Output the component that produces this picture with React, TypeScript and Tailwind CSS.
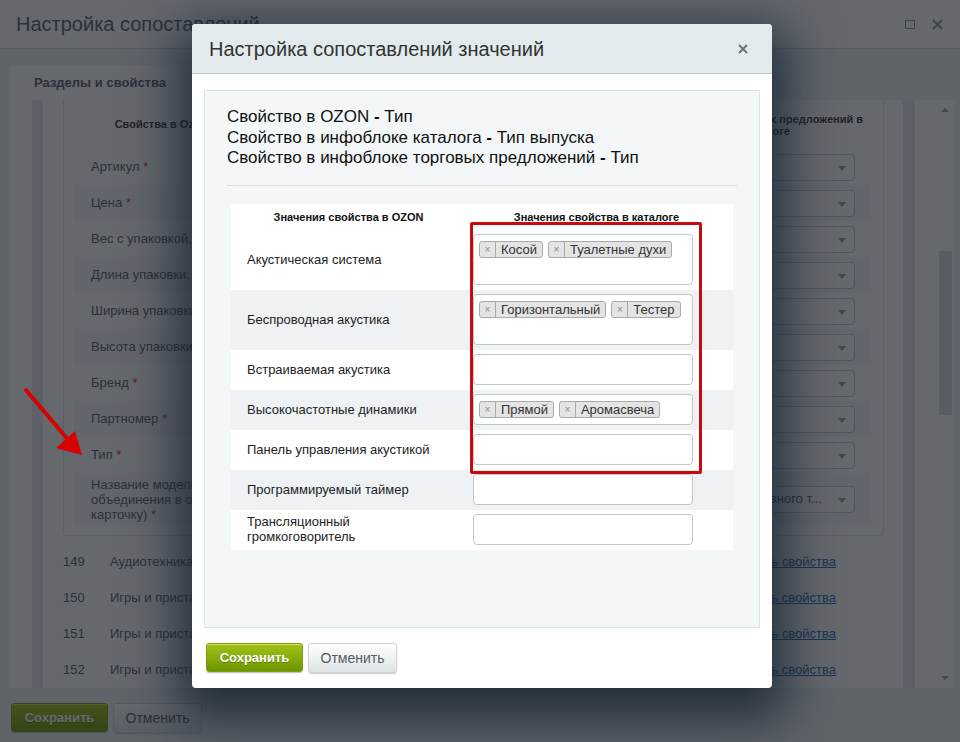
import React from "react";

const propRows = [
  "Артикул",
  "Цена",
  "Вес с упаковкой, г",
  "Длина упаковки, мм",
  "Ширина упаковки, мм",
  "Высота упаковки, мм",
  "Бренд",
  "Партномер",
  "Тип",
];

const sections = [
  { id: 149, name: "Аудиотехника" },
  { id: 150, name: "Игры и приставки" },
  { id: 151, name: "Игры и приставки" },
  { id: 152, name: "Игры и приставки" },
];

const valueRows = [
  { label: "Акустическая система", chips: ["Косой", "Туалетные духи"], tall: true },
  { label: "Беспроводная акустика", chips: ["Горизонтальный", "Тестер"], tall: true },
  { label: "Встраиваемая акустика", chips: [] as string[] },
  { label: "Высокочастотные динамики", chips: ["Прямой", "Аромасвеча"] },
  { label: "Панель управления акустикой", chips: [] as string[] },
  { label: "Программируемый таймер", chips: [] as string[] },
  { label: "Трансляционный громкоговоритель", chips: [] as string[] },
];

function Select({ text }: { text?: string }) {
  return (
    <div className="relative mr-[16px] ml-auto flex h-[27px] w-[184px] items-center overflow-hidden rounded-[4px] border border-[#c5cdd2] bg-white pr-[22px] pl-[8px]">
      <span className="whitespace-nowrap text-[13px] text-[#535c69]">{text}</span>
      <span className="absolute top-[11px] right-[8px] h-0 w-0 border-x-[4px] border-t-[5px] border-x-transparent border-t-[#9aa2a8]" />
    </div>
  );
}

function Chip({ label }: { label: string }) {
  return (
    <span className="inline-flex h-[17px] items-stretch rounded-[3px] border border-[#aaa] bg-[#e4e4e4] text-[13px] leading-[15px] text-[#333]">
      <span className="flex w-[16px] items-center justify-center border-r border-[#aaa] text-[10px] text-[#888]">×</span>
      <span className="pr-[5px] pl-[5px]">{label}</span>
    </span>
  );
}

function GreenButton({ children }: { children: React.ReactNode }) {
  return (
    <button className="h-[29px] w-[97px] rounded-[3px] border border-[#7c9d0e] bg-linear-to-b from-[#a3c317] to-[#6c9600] text-[13px] font-bold text-white shadow-[inset_0_1px_0_#d3e46b,0_1px_1px_rgba(0,0,0,0.25)] [text-shadow:0_1px_0_rgba(60,80,0,0.5)]">
      {children}
    </button>
  );
}

function GrayButton({ children }: { children: React.ReactNode }) {
  return (
    <button className="h-[30px] w-[89px] rounded-[3px] border border-[#cdd5d9] bg-linear-to-b from-white to-[#dde4e7] text-[14px] text-[#535c69] shadow-[0_1px_1px_rgba(0,0,0,0.2)]">
      {children}
    </button>
  );
}

function Page() {
  return (
    <div className="flex h-full flex-col">
      <header className="flex h-[49px] shrink-0 items-center justify-between border-b border-[#d5dadd] bg-white pr-[16px] pl-[16px]">
        <h1 className="text-[20px] text-[#535c69]">Настройка сопоставлений</h1>
        <div className="flex items-center gap-[17px] pr-[1px]">
          <span className="h-[9px] w-[10px] border-[1.5px] border-[#8f969c]" />
          <svg width="11" height="11" viewBox="0 0 11 11">
            <path d="M1 1L10 10M10 1L1 10" stroke="#8f969c" strokeWidth="2" />
          </svg>
        </div>
      </header>

      <div className="flex min-h-0 flex-1 flex-col pt-[16px] pr-[5px] pl-[10px]">
        <div className="flex h-[35px] w-[300px] items-center rounded-t-[4px] bg-white pl-[24px] text-[13px] font-bold text-[#535c69]">
          Разделы и свойства
        </div>
        <div className="flex min-h-0 flex-1 overflow-hidden bg-white">
          <div className="w-[22px]" />
          <div className="w-[11px] bg-[#e6ebee]" />
          <div className="w-[20px]" />
          <div className="flex w-[821px] flex-col">
            <div className="rounded-b-[4px] border-x border-b border-[#dfe5e8] pr-[12px] pb-[10px] pl-[10px]">
              <div className="flex h-[49px] items-center text-[11px] font-bold text-[#333]">
                <div className="w-[174px] text-center">Свойства в Ozon</div>
                <div className="ml-auto flex flex-col items-end pr-[8px] leading-[12px]">
                  <span>Свойства в инфоблоке торговых предложений в</span>
                  <span className="mr-[73px]">каталоге</span>
                </div>
              </div>
              {propRows.map((name, i) => (
                <div key={name} className={"flex h-[36px] items-center " + (i % 2 === 1 ? "bg-[#f5f7f8]" : "")}>
                  <span className="pl-[17px] text-[13px] text-[#535c69]">
                    {name} <span className="text-[#d2322d]">*</span>
                  </span>
                  <Select />
                </div>
              ))}
              <div className="flex h-[52px] items-center bg-[#f5f7f8]">
                <span className="pl-[17px] text-[13px] leading-[15px] text-[#535c69]">
                  Название модели (для
                  <br />
                  объединения в одну
                  <br />
                  карточку) <span className="text-[#d2322d]">*</span>
                </span>
                <Select text="Название основного т..." />
              </div>
            </div>
            <div className="pt-[8px]">
              {sections.map((s) => (
                <div key={s.id} className="flex h-[36px] items-center text-[13px] text-[#535c69]">
                  <span className="w-[47px]">{s.id}</span>
                  <span>{s.name}</span>
                  <a className="mr-[48px] ml-auto text-[#2067b0] underline">Показать свойства</a>
                </div>
              ))}
            </div>
          </div>
          <div className="w-[19px]" />
          <div className="w-[12px] bg-[#e6ebee]" />
          <div className="w-[20px]" />
          <div className="flex w-[20px] flex-col">
            <div className="flex h-[20px] items-center justify-center">
              <span className="h-0 w-0 border-x-[4px] border-b-[4px] border-x-transparent border-b-[#9aa2a8]" />
            </div>
            <div className="h-[131px]" />
            <div className="ml-[4px] h-[164px] w-[13px] bg-[#d9dee1]" />
            <div className="flex-1" />
            <div className="flex h-[20px] items-center justify-center">
              <span className="h-0 w-0 border-x-[4px] border-t-[4px] border-x-transparent border-t-[#9aa2a8]" />
            </div>
          </div>
        </div>
      </div>

      <footer className="flex h-[54px] shrink-0 items-start gap-[5px] pt-[15px] pl-[11px]">
        <GreenButton>Сохранить</GreenButton>
        <GrayButton>Отменить</GrayButton>
      </footer>
    </div>
  );
}

function ValueBox({ chips, tall }: { chips: string[]; tall?: boolean }) {
  return (
    <div
      className={
        "flex w-[220px] flex-wrap content-start gap-[5px] rounded-[4px] border border-[#c2c6c9] bg-white px-[5px] pt-[6px] " +
        (tall ? "h-[51px]" : "h-[31px]")
      }
    >
      {chips.map((c) => (
        <Chip key={c} label={c} />
      ))}
    </div>
  );
}

function MappingDialog() {
  return (
    <div className="absolute top-[24px] left-[192px] flex h-[664px] w-[580px] flex-col overflow-hidden rounded-[4px] bg-white shadow-[0_18px_50px_14px_rgba(18,32,46,0.8)]">
      <div className="flex h-[50px] shrink-0 items-center justify-between border-b border-[#c3cacd] bg-[#e2eaed] pr-[24px] pl-[17px]">
        <span className="text-[20px] text-[#333]">Настройка сопоставлений значений</span>
        <svg width="10" height="10" viewBox="0 0 10 10">
          <path d="M1 1L9 9M9 1L1 9" stroke="#6b747c" strokeWidth="2" />
        </svg>
      </div>

      <div className="flex min-h-0 flex-1 flex-col px-[12px] pt-[16px]">
        <div className="relative h-[538px] border border-[#dbe5ea] bg-[#f4f7f8] px-[22px] pt-[16px]">
          <div className="text-[17px] leading-[20.5px] text-[#111]">
            <div>
              Свойство в OZON <b>-</b> Тип
            </div>
            <div>
              Свойство в инфоблоке каталога <b>-</b> Тип выпуска
            </div>
            <div>
              Свойство в инфоблоке торговых предложений <b>-</b> Тип
            </div>
          </div>
          <div className="mt-[16px] border-t border-[#dcdfe1]" />

          <div className="mx-[4px] mt-[18px] bg-white">
            <div className="flex h-[26px] items-start pt-[5px] text-[11px] font-bold text-[#111]">
              <div className="w-[235px] text-center">Значения свойства в OZON</div>
              <div className="w-[261px] text-center">Значения свойства в каталоге</div>
            </div>
            {valueRows.map((r, i) => (
              <div
                key={r.label}
                className={"flex items-start pt-[4px] pb-[5px] " + (i % 2 === 1 ? "bg-[#eef2f4]" : "bg-white")}
              >
                <div className="flex w-[235px] items-center self-stretch pl-[16px]">
                  <span className="max-w-[195px] text-[13px] leading-[15px] text-[#222]">{r.label}</span>
                </div>
                <div className="pl-[7px]">
                  <ValueBox chips={r.chips} tall={r.tall} />
                </div>
              </div>
            ))}
          </div>

          {/* highlighted values column */}
          <div className="absolute top-[131px] left-[265px] h-[252px] w-[232px] rounded-[2px] border-[3px] border-[#c80a0a]" />
        </div>

        <div className="flex items-start gap-[5px] pt-[15px] pl-[2px]">
          <GreenButton>Сохранить</GreenButton>
          <GrayButton>Отменить</GrayButton>
        </div>
      </div>
    </div>
  );
}

export default function App() {
  return (
    <div className="relative h-[742px] w-[960px] overflow-hidden bg-[#eef2f4] font-['Liberation_Sans',Arial,sans-serif]">
      <Page />
      <div className="absolute inset-0 bg-[#151a22]/[0.66]" />
      <svg className="absolute top-[386px] left-[20px]" width="70" height="76" viewBox="0 0 70 76">
        <path d="M6 4L50 56" stroke="#d80000" strokeWidth="4" strokeLinecap="round" />
        <path d="M62 69L36 62L55 45Z" fill="#d80000" />
      </svg>
      <MappingDialog />
    </div>
  );
}
